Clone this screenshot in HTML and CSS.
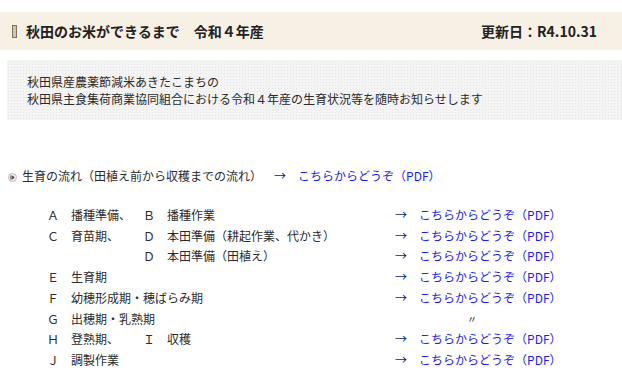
FILE: index.html
```html
<!DOCTYPE html>
<html lang="ja">
<head>
    <meta charset="utf-8">
    <title>秋田のお米ができるまで</title>
    <link rel="stylesheet" href="styles.css">
</head>
<body>
    <div class="page">
        <div class="title-bar">
            <h1><span class="marker"></span>秋田のお米ができるまで　令和４年産</h1>
            <div class="updated">更新日：R4.10.31</div>
        </div>

        <div class="intro">
            <p>秋田県産農薬節減米あきたこまちの</p>
            <p>秋田県主食集荷商業協同組合における令和４年産の生育状況等を随時お知らせします</p>
        </div>

        <p class="flow">
            <svg class="bullet" width="9" height="9" viewBox="0 0 9 9">
                <circle cx="4.5" cy="4.5" r="4" fill="#f7f1ef" stroke="#c9b3ab" stroke-width="1"/>
                <rect x="2.5" y="2.5" width="1" height="4" fill="#333"/>
                <path d="M4.2 2.3 L6.6 4.5 L4.2 6.7 Z" fill="#333"/>
            </svg>生育の流れ（田植え前から収穫までの流れ）　<span class="arrow">→</span>　<a href="#">こちらからどうぞ（PDF）</a>
        </p>

        <div class="steps">
            <div>Ａ　播種準備、　Ｂ　播種作業</div>
            <div><span class="arrow">→</span>　<a href="#">こちらからどうぞ（PDF）</a></div>

            <div>Ｃ　育苗期、　　Ｄ　本田準備（耕起作業、代かき）</div>
            <div><span class="arrow">→</span>　<a href="#">こちらからどうぞ（PDF）</a></div>

            <div>　　　　　　　　Ｄ　本田準備（田植え）</div>
            <div><span class="arrow">→</span>　<a href="#">こちらからどうぞ（PDF）</a></div>

            <div>Ｅ　生育期</div>
            <div><span class="arrow">→</span>　<a href="#">こちらからどうぞ（PDF）</a></div>

            <div>Ｆ　幼穂形成期・穂ばらみ期</div>
            <div><span class="arrow">→</span>　<a href="#">こちらからどうぞ（PDF）</a></div>

            <div>Ｇ　出穂期・乳熟期</div>
            <div class="ditto">〃</div>

            <div>Ｈ　登熟期、　　Ｉ　収穫</div>
            <div><span class="arrow">→</span>　<a href="#">こちらからどうぞ（PDF）</a></div>

            <div>Ｊ　調製作業</div>
            <div><span class="arrow">→</span>　<a href="#">こちらからどうぞ（PDF）</a></div>
        </div>
    </div>
</body>
</html>
```

FILE: styles.css
```css
body {
    margin: 0;
    font-family: "Noto Sans CJK JP", "Noto Sans", sans-serif;
    font-size: 12px;
    color: #2b2b2b;
    background-color: #fff;
    text-spacing-trim: space-all;
}

p {
    margin: 0;
}

a {
    color: #1c1cf0;
    text-decoration: none;
}

.page {
    padding-top: 12px;
}

.title-bar {
    display: flex;
    align-items: center;
    justify-content: space-between;
    height: 38px;
    padding: 0 25px 0 12px;
    background-color: #f6f0e5;
    color: #222;
}

.title-bar h1 {
    display: flex;
    align-items: center;
    margin: 0;
    font-size: 14px;
    font-weight: bold;
}

.marker {
    display: inline-block;
    width: 3px;
    height: 11px;
    margin-right: 9px;
    border: 1px solid #7d735f;
    background-color: #cfc6b2;
}

.updated {
    font-size: 14px;
    font-weight: bold;
}

.intro {
    display: flex;
    flex-direction: column;
    justify-content: center;
    height: 60px;
    margin: 10px 0 0 7px;
    padding-left: 20px;
    line-height: 17px;
    background-color: #f4f4f4;
    background-image: radial-gradient(#e4e4e4 0.7px, transparent 0.8px);
    background-size: 3px 3px;
}

.flow {
    margin-top: 47px;
    padding-left: 8px;
    line-height: 17px;
    white-space: nowrap;
}

.bullet {
    margin-right: 5px;
    vertical-align: -1px;
}

.arrow {
    color: #14148c;
}

.steps {
    display: grid;
    grid-template-columns: 348px auto;
    margin-top: 21px;
    padding-left: 47px;
    line-height: 20.7px;
    white-space: nowrap;
}

.ditto {
    padding-left: 72px;
    font-size: 10px;
}
```
